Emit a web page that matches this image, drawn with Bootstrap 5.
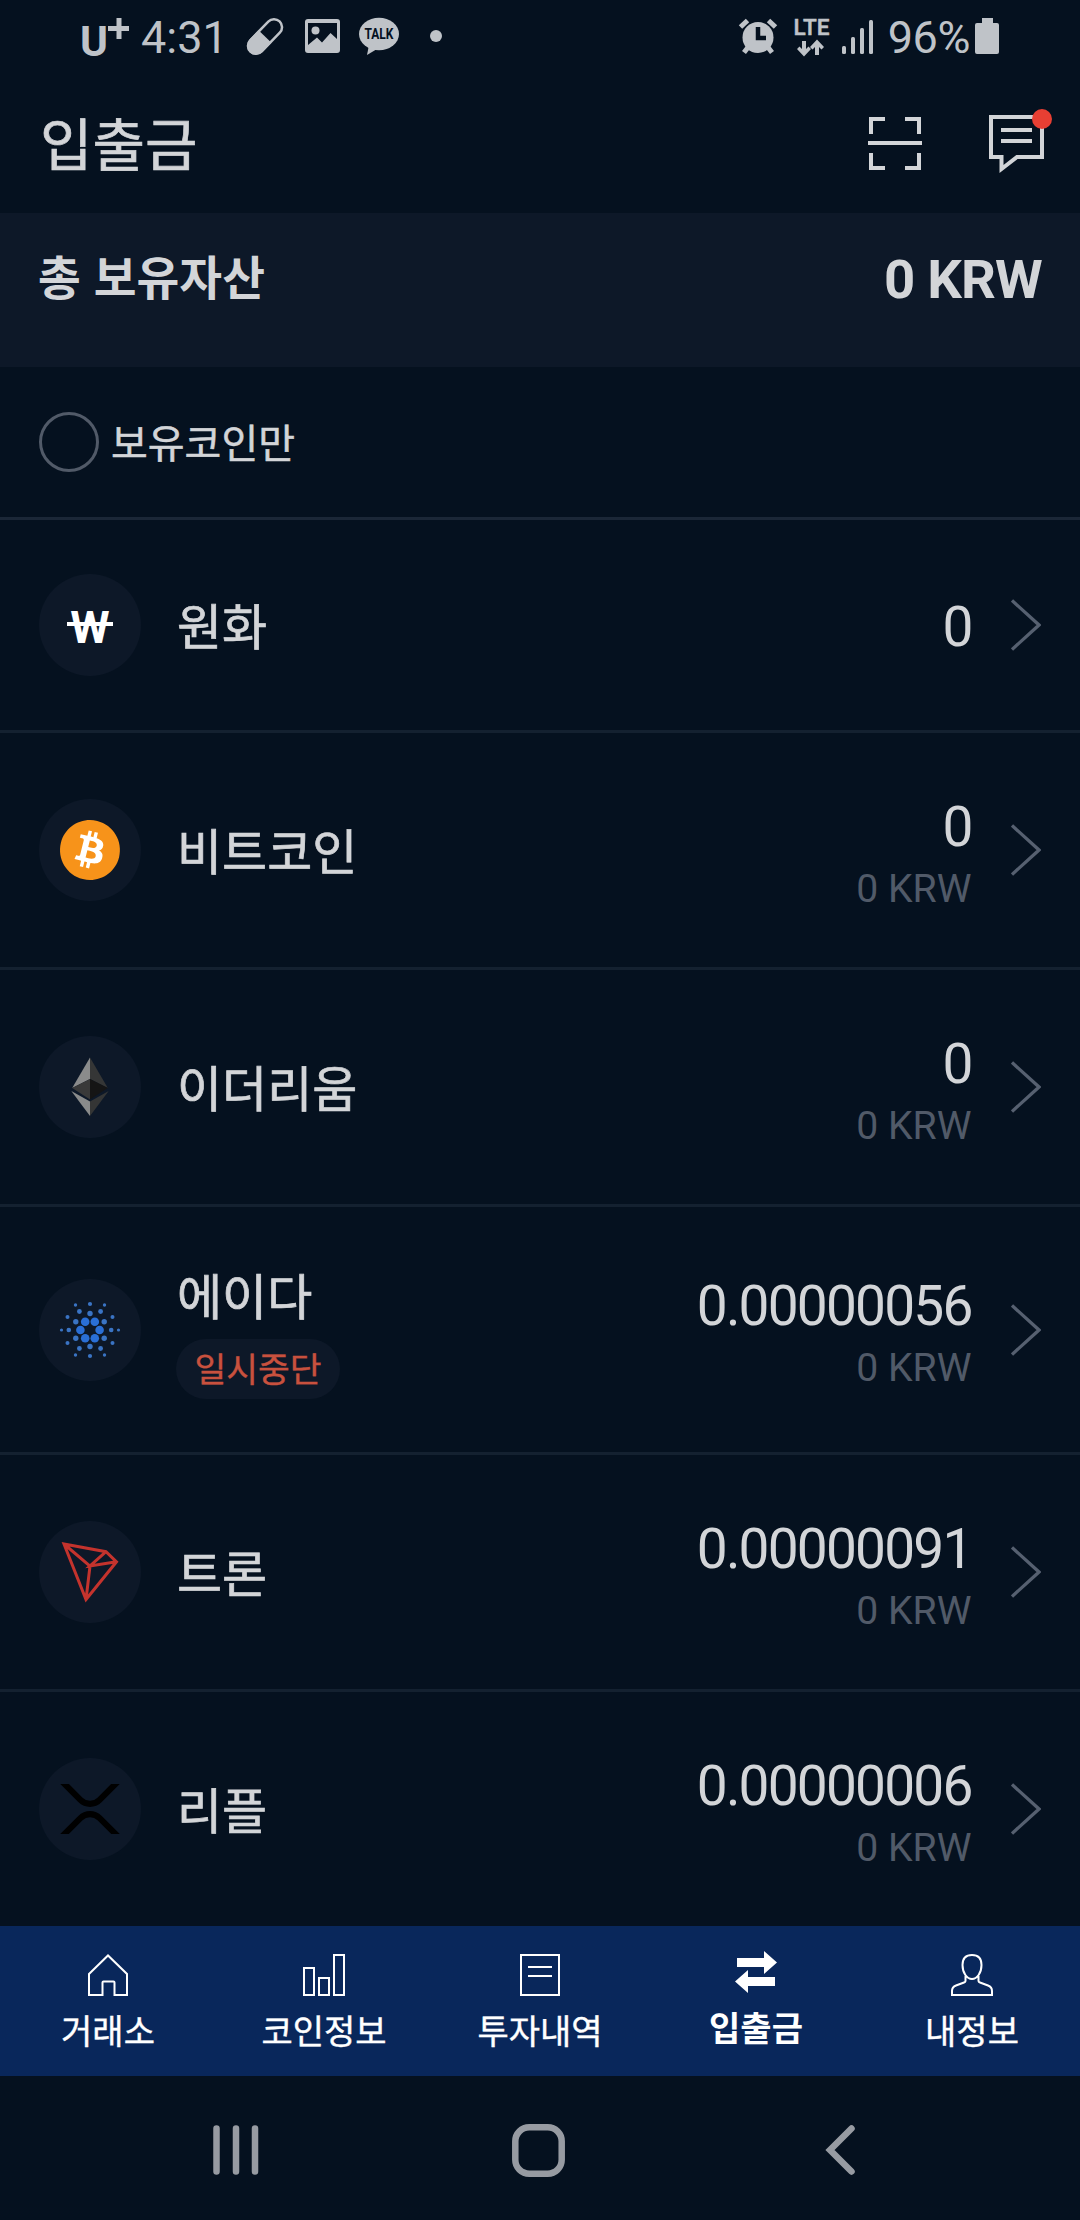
<!DOCTYPE html>
<html lang="ko">
<head>
<meta charset="utf-8">
<meta name="viewport" content="width=device-width, initial-scale=1">
<title>입출금</title>
<link rel="stylesheet" href="https://cdn.jsdelivr.net/npm/bootstrap@5.3.0/dist/css/bootstrap.min.css">
<style>
body{background:#05111f;color:#d3d5d8;font-family:"Noto Sans CJK KR","Noto Sans",sans-serif;width:1080px;height:2220px;overflow:hidden}
svg{display:block;flex:none;overflow:visible}
svg text,.latin{font-family:Roboto,"Liberation Sans",sans-serif}
.status-bar{height:72px;padding:0 81px 0 82px;color:#bfc3c8}
.status-text{font-size:45px;line-height:72px;height:72px;padding-top:2px}
.ms-time{margin-left:12px}.ms-pill{margin-left:19px}.ms-pic{margin-left:22px}.ms-talk{margin-left:19px}.ms-dot{margin-left:31px}
.ms-lte{margin-left:17px}.ms-sig{margin-left:13px}.ms-pct{margin-left:14px;letter-spacing:-.4px}.ms-bat{margin-left:5px}
.app-bar{height:141px;padding:0 27px 0 40px}
.app-title{font-size:57px;line-height:80px;padding-bottom:4px;-webkit-text-stroke:.7px}
.app-icons{gap:67px;padding-bottom:5px}
.total-panel{height:154px;background:#0d1828;padding:32px 38px 0 38px}
.total-label{font-size:46.5px;line-height:60px;font-weight:700}
.total-value{font-size:54.5px;line-height:68px;font-weight:700;letter-spacing:-.8px}
.filter-bar{height:153px;border-bottom:3px solid #1b2737;padding:0 39px}
.radio-ring{width:60px;height:60px;border:3px solid #515a68;border-radius:50%;background:none}
.filter-label{font-size:40px;line-height:60px;margin-left:12px;padding-bottom:3px;-webkit-text-stroke:.5px}
.coin-list{--bs-list-group-bg:transparent;--bs-list-group-color:#d3d5d8;--bs-list-group-border-radius:0}
.coin-list .coin-row{height:237px;border:0;border-bottom:3px solid #142130;padding:0 39px}
.coin-list .coin-krw{height:213px}
.coin-list .coin-paused{height:248px}
.coin-list .coin-row:last-child{height:234px;border-bottom:0}
.coin-name{font-size:49px;line-height:65px;padding-bottom:3px;text-indent:1px;-webkit-text-stroke:.7px}
.coin-text{margin-left:35px}
.paused-pill{width:164px;height:60px;border-radius:30px;background:#0d1828;color:#c8513e;font-size:34.5px;line-height:57px;margin-top:10px;font-weight:400;padding:0;-webkit-text-stroke:.4px}
.amount{font-size:55px;line-height:77px;letter-spacing:-1.8px}
.coin-krw .amount{padding-top:4px}
.worth{font-size:39.2px;line-height:46px;color:#515a68}
.amounts{margin-right:39.500px}
.tab-strip{height:150px;background:#09275b;color:#fff}
.tab-strip .tab-cell{flex:0 0 20%;padding:28px 0 0;color:#fff;border-radius:0;font-size:34px;line-height:50px;background:none;-webkit-text-stroke:.4px}
.tab-cell svg{margin-bottom:9px}
.tab-strip .tab-on{font-weight:700;padding-top:25px;-webkit-text-stroke:0}
.sys-bar{height:144px;padding:4px 225px 0 212px}
.sys-home{margin-right:8px}
</style>
<script src="https://cdn.jsdelivr.net/npm/bootstrap@5.3.0/dist/js/bootstrap.bundle.min.js"></script>
</head>
<body>
<svg width="0" height="0" class="position-absolute" aria-hidden="true">
  <symbol id="chev" viewBox="0 0 30 52"><path d="M1 1.500L28 26 1 50.500" fill="none" stroke="#566070" stroke-width="3.300"/></symbol>
</svg>
<header class="status-bar d-flex justify-content-between">
  <div class="d-flex align-items-center">
    <svg width="47" height="72" viewBox="0 0 47 72" fill="#bfc3c8"><text x="-2" y="56" font-size="43" font-weight="700" textLength="28" lengthAdjust="spacingAndGlyphs">U</text><path d="M34.500 18h5v8H47v5h-7.500v8h-5v-8H26v-5h8.500z"/></svg>
    <div class="status-text latin ms-time">4:31</div>
    <svg class="ms-pill" width="36" height="72" viewBox="0 0 36 72"><g transform="translate(18 36.500) rotate(44)"><rect x="-8" y="-21" width="16" height="42" rx="8" fill="none" stroke="#bfc3c8" stroke-width="2.500"/><path d="M-9 0H9V13A9 9 0 0 1-9 13Z" fill="#bfc3c8"/></g></svg>
    <svg class="ms-pic" width="35" height="72" viewBox="0 0 35 72"><path fill="#bfc3c8" fill-rule="evenodd" d="M3 19H32a3 3 0 0 1 3 3V50a3 3 0 0 1-3 3H3a3 3 0 0 1-3-3V22a3 3 0 0 1 3-3ZM3 23V45L12 37.500l5 5 8.500-9.500L32 39V23Z"/><circle cx="10.500" cy="30.500" r="4" fill="#bfc3c8"/></svg>
    <svg class="ms-talk" width="40" height="72" viewBox="0 0 40 72"><ellipse cx="20" cy="34" rx="20" ry="16.300" fill="#bfc3c8"/><path d="M10 45L8 55 18 49z" fill="#bfc3c8"/><text x="5.500" y="39" font-size="14.500" font-weight="700" textLength="29" lengthAdjust="spacingAndGlyphs" fill="#05111f">TALK</text></svg>
    <svg class="ms-dot" width="12" height="72" viewBox="0 0 12 72"><circle cx="6" cy="36" r="6" fill="#bfc3c8"/></svg>
  </div>
  <div class="d-flex align-items-center">
    <svg width="38" height="72" viewBox="0 0 38 72"><g stroke="#bfc3c8" stroke-width="5" fill="none"><path d="M1.500 27L8.500 20.500M36.500 27L29.500 20.500"/><path d="M10 46L5 52.500M28 46l5 6.500"/></g><circle cx="19" cy="37.500" r="15.500" fill="#bfc3c8"/><path d="M19 27V38H27" fill="none" stroke="#05111f" stroke-width="4.500"/></svg>
    <svg class="ms-lte" width="35" height="72" viewBox="0 0 35 72" fill="#bfc3c8"><text x="-.5" y="35" font-size="22.500" font-weight="500" stroke="#bfc3c8" stroke-width=".5" textLength="36" lengthAdjust="spacingAndGlyphs">LTE</text><path d="M8 41h4v8l2.500-2.500L17 49l-7 7.500L3 49l2.500-2.500L8 49zM21 55h4v-8l2.500 2.500L30 47l-7-7.500L16 47l2.500 2.500L21 47z"/></svg>
    <svg class="ms-sig" width="32" height="72" viewBox="0 0 32 72" fill="#bfc3c8"><rect y="46" width="4" height="8" rx="1.500"/><rect x="9" y="37" width="4" height="17" rx="1.500"/><rect x="18" y="28" width="4" height="26" rx="1.500"/><rect x="27" y="20" width="4" height="34" rx="1.500"/></svg>
    <div class="status-text latin ms-pct">96%</div>
    <svg class="ms-bat" width="24" height="72" viewBox="0 0 24 72" fill="#bfc3c8"><path d="M7 18h11v5h4q2 0 2 2v27q0 2-2 2H2q-2 0-2-2V25q0-2 2-2h5z"/></svg>
  </div>
</header>
<div class="app-bar d-flex align-items-center justify-content-between">
  <h1 class="app-title fw-normal m-0">입출금</h1>
  <div class="app-icons d-flex">
    <svg width="54" height="66" viewBox="0 0 54 66" fill="none" stroke="#d3d5d8" stroke-width="4"><path d="M17 12H3V27M37 12H51V27M3 46V61H17M51 46V61H37M0 36H54"/></svg>
    <svg width="64" height="66" viewBox="0 0 64 66" fill="none" stroke="#d3d5d8" stroke-width="4"><path d="M2 10H53V50H28L12.500 62V50H2ZM12 23H43M12 34H43"/><circle cx="53" cy="12" r="10" fill="#e83f33" stroke="none"/></svg>
  </div>
</div>
<main>
  <section class="total-panel d-flex justify-content-between align-items-start">
    <div class="total-label">총 보유자산</div>
    <div class="total-value latin">0 KRW</div>
  </section>
  <div class="filter-bar d-flex align-items-center">
    <span class="radio-ring"></span><span class="filter-label">보유코인만</span>
  </div>
  <ul class="coin-list list-group list-group-flush">
    <li class="coin-row coin-krw list-group-item d-flex align-items-center">
      <svg width="102" height="102" viewBox="-51 -51 102 102"><circle r="51" fill="#0d1828"/><text x="0" y="18" text-anchor="middle" font-size="45" font-weight="700" fill="#fff">W</text><path d="M-23-1H23" stroke="#fff" stroke-width="4"/></svg>
      <div class="coin-text"><div class="coin-name">원화</div></div>
      <div class="amounts latin ms-auto text-end"><div class="amount">0</div></div>
      <svg width="30" height="52"><use href="#chev"/></svg>
    </li>
    <li class="coin-row list-group-item d-flex align-items-center">
      <svg width="102" height="102" viewBox="-51 -51 102 102"><circle r="51" fill="#0d1828"/><circle r="28" fill="#fff"/><path transform="translate(-30 -30) scale(2.500)" fill="#f7931a" d="M23.638 14.904c-1.602 6.430-8.113 10.340-14.542 8.736C2.670 22.050-1.244 15.525.362 9.105 1.962 2.670 8.475-1.243 14.900.358c6.430 1.605 10.342 8.115 8.738 14.548v-.002zm-6.350-4.613c.24-1.590-.974-2.450-2.640-3.030l.54-2.153-1.315-.33-.525 2.107c-.345-.087-.705-.167-1.064-.25l.526-2.127-1.320-.33-.54 2.165c-.285-.067-.565-.132-.84-.2l-1.815-.45-.35 1.407s.975.225.955.236c.535.136.63.486.615.766l-1.477 5.920c-.075.166-.24.406-.614.314.015.02-.96-.24-.96-.24l-.66 1.510 1.710.426.93.242-.54 2.190 1.320.327.54-2.170c.36.1.705.19 1.050.273l-.51 2.154 1.320.33.545-2.190c2.240.427 3.930.257 4.640-1.774.57-1.637-.03-2.580-1.217-3.196.854-.193 1.500-.76 1.680-1.930h.01zm-3.010 4.220c-.404 1.640-3.157.75-4.050.53l.72-2.900c.896.23 3.757.67 3.330 2.370zm.41-4.240c-.37 1.490-2.662.735-3.405.55l.654-2.640c.744.18 3.137.524 2.750 2.084v.006z"/></svg>
      <div class="coin-text"><div class="coin-name">비트코인</div></div>
      <div class="amounts latin ms-auto text-end"><div class="amount">0</div><div class="worth">0 KRW</div></div>
      <svg width="30" height="52"><use href="#chev"/></svg>
    </li>
    <li class="coin-row list-group-item d-flex align-items-center">
      <svg width="102" height="102" viewBox="-51 -51 102 102"><circle r="51" fill="#0d1828"/><path d="M0-29.500L-17.800 1 0-8z" fill="#8a8b8b"/><path d="M0-29.500L17.800 1 0-8z" fill="#353636"/><path d="M0-8L-17.800 1 0 12.500z" fill="#393939"/><path d="M0-8L17.800 1 0 12.500z" fill="#151515"/><path d="M-18.700 4L0 14.500V29z" fill="#8a8b8b"/><path d="M18.700 4L0 14.500V29z" fill="#343535"/></svg>
      <div class="coin-text"><div class="coin-name">이더리움</div></div>
      <div class="amounts latin ms-auto text-end"><div class="amount">0</div><div class="worth">0 KRW</div></div>
      <svg width="30" height="52"><use href="#chev"/></svg>
    </li>
    <li class="coin-row coin-paused list-group-item d-flex align-items-center">
      <svg width="102" height="102" viewBox="-51 -51 102 102"><circle r="51" fill="#0d1828"/>
        <g fill="#2a6fd6"><circle cx="-4.800" cy="-8.300" r="4.300"/><circle cx="4.800" cy="-8.300" r="4.300"/><circle cx="9.600" r="4.300"/><circle cx="4.800" cy="8.300" r="4.300"/><circle cx="-4.800" cy="8.300" r="4.300"/><circle cx="-9.600" r="4.300"/></g>
        <g fill="#3a74c4"><circle cy="-16.500" r="2.700"/><circle cy="16.500" r="2.700"/><circle cx="-14.200" cy="-8.300" r="2.700"/><circle cx="14.200" cy="-8.300" r="2.700"/><circle cx="-14.200" cy="8.300" r="2.700"/><circle cx="14.200" cy="8.300" r="2.700"/>
        <circle cx="-10.600" cy="-18.500" r="2.400"/><circle cx="10.600" cy="-18.500" r="2.400"/><circle cx="-10.600" cy="18.500" r="2.400"/><circle cx="10.600" cy="18.500" r="2.400"/><circle cx="-21.200" r="2.300"/><circle cx="21.200" r="2.300"/>
        <circle cy="-26" r="2.100"/><circle cy="26" r="2.100"/><circle cx="-22.500" cy="-13" r="2"/><circle cx="22.500" cy="-13" r="2"/><circle cx="-22.500" cy="13" r="2"/><circle cx="22.500" cy="13" r="2"/>
        <circle cx="-14.500" cy="-25" r="1.700"/><circle cx="14.500" cy="-25" r="1.700"/><circle cx="-14.500" cy="25" r="1.700"/><circle cx="14.500" cy="25" r="1.700"/><circle cx="-28.500" r="1.600"/><circle cx="28.500" r="1.600"/></g></svg>
      <div class="coin-text"><div class="coin-name">에이다</div><div class="paused-pill badge d-block text-center">일시중단</div></div>
      <div class="amounts latin ms-auto text-end"><div class="amount">0.00000056</div><div class="worth">0 KRW</div></div>
      <svg width="30" height="52"><use href="#chev"/></svg>
    </li>
    <li class="coin-row list-group-item d-flex align-items-center">
      <svg width="102" height="102" viewBox="-51 -51 102 102"><circle r="51" fill="#0d1828"/><path d="M-26-28L16-20.300 26.500-10.200-4 27.500ZM-26-28L0-6-4 27.500M16-20.300L0-6 26.500-10.200" fill="none" stroke="#c4332d" stroke-width="3"/></svg>
      <div class="coin-text"><div class="coin-name">트론</div></div>
      <div class="amounts latin ms-auto text-end"><div class="amount">0.00000091</div><div class="worth">0 KRW</div></div>
      <svg width="30" height="52"><use href="#chev"/></svg>
    </li>
    <li class="coin-row list-group-item d-flex align-items-center">
      <svg width="102" height="102" viewBox="-51 -51 102 102"><circle r="51" fill="#0d1828"/><g transform="translate(-29.800 -25) scale(.1165 .118)" fill="#000"><path d="M437 0h74L357 152.480c-55.770 55.190-146.190 55.190-202 0L.94 0H75L192 115.830a91.110 91.110 0 0 0 127.910 0Z"/><path d="M74.050 424H0L155 270.580c55.770-55.190 146.190-55.190 202 0L512 424H438L320 308.170a91.110 91.110 0 0 0-127.910 0Z"/></g></svg>
      <div class="coin-text"><div class="coin-name">리플</div></div>
      <div class="amounts latin ms-auto text-end"><div class="amount">0.00000006</div><div class="worth">0 KRW</div></div>
      <svg width="30" height="52"><use href="#chev"/></svg>
    </li>
  </ul>
</main>
<nav class="tab-strip nav flex-nowrap">
  <a class="tab-cell nav-link d-flex flex-column align-items-center"><svg width="42" height="42" viewBox="0 0 42 42" fill="none" stroke="#fff" stroke-width="2"><path d="M2 20L21 1.500 40 20V41H27.500V28.500Q27.500 27.500 26.500 27.500H16.500Q15.500 27.500 15.500 28.500V41H2Z"/></svg>거래소</a>
  <a class="tab-cell nav-link d-flex flex-column align-items-center"><svg width="42" height="42" viewBox="0 0 42 42" fill="none" stroke="#fff" stroke-width="2"><path d="M1 14h10v27H1zM16 24h10v17H16zM31 1h10v40H31z"/></svg>코인정보</a>
  <a class="tab-cell nav-link d-flex flex-column align-items-center"><svg width="42" height="42" viewBox="0 0 42 42" fill="none" stroke="#fff" stroke-width="2"><path d="M2 1H40V41H2ZM9 13H33M9 22H33"/></svg>투자내역</a>
  <a class="tab-cell tab-on nav-link d-flex flex-column align-items-center"><svg width="42" height="42" viewBox="0 0 42 42" fill="#fff"><path d="M2 7H29V0L42 11.500 29 23V16H2ZM40 26H13V19L0 30.500 13 42V35H40Z"/></svg>입출금</a>
  <a class="tab-cell nav-link d-flex flex-column align-items-center"><svg width="42" height="42" viewBox="0 0 42 42" fill="none" stroke="#fff" stroke-width="2"><path d="M21 1C27 1 30.500 4 30.500 11 30.500 19 26 25 21 25S11.500 19 11.500 11C11.500 4 15 1 21 1ZM14.500 22V27Q14.500 28 13 28.500L5 31.500Q1 33 1 37V41H41V37Q41 33 37 31.500L29 28.500Q27.500 28 27.500 27V22"/></svg>내정보</a>
</nav>
<footer class="sys-bar d-flex justify-content-between align-items-center">
  <svg width="47" height="52" viewBox="0 0 47 52" stroke="#979ba2" stroke-width="6.500" stroke-linecap="round"><path d="M4.500 4.500V47.500M24 4.500V47.500M43 4.500V47.500"/></svg>
  <svg class="sys-home" width="53" height="53" viewBox="0 0 53 53" fill="none" stroke="#979ba2" stroke-width="6.500"><rect x="3.300" y="3.300" width="46.400" height="46.400" rx="14"/></svg>
  <svg width="30" height="52" viewBox="0 0 30 52" fill="none" stroke="#979ba2" stroke-width="6.500" stroke-linecap="round"><path d="M26.500 4.500L5 26 26.500 47.500"/></svg>
</footer>
</body>
</html>
